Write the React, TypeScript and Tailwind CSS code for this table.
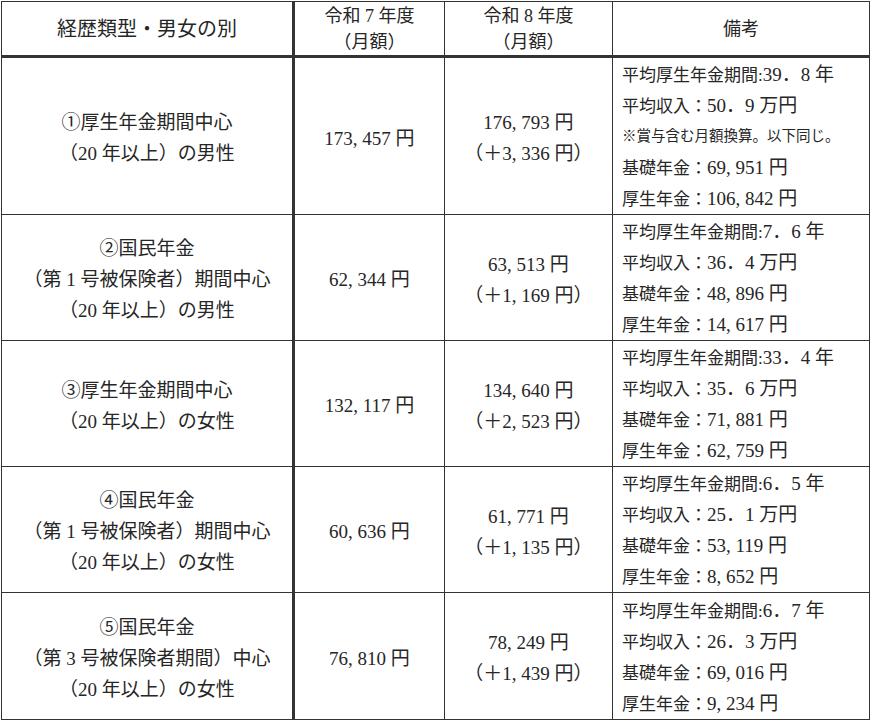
import React from "react";

type Note = { label: string; value?: string; small?: boolean };

type Row = {
  label: string[];
  r7: string;
  r8: string;
  diff: string;
  notes: Note[];
  h: string;
};

const rows: Row[] = [
  {
    label: ["①厚生年金期間中心", "（20 年以上）の男性"],
    r7: "173, 457 円",
    r8: "176, 793 円",
    diff: "（＋3, 336 円）",
    notes: [
      { label: "平均厚生年金期間:", value: "39．8 年" },
      { label: "平均収入：", value: "50．9 万円" },
      { label: "※賞与含む月額換算。以下同じ。", small: true },
      { label: "基礎年金：", value: "69, 951 円" },
      { label: "厚生年金：", value: "106, 842 円" },
    ],
    h: "h-[158px]",
  },
  {
    label: ["②国民年金", "（第 1 号被保険者）期間中心", "（20 年以上）の男性"],
    r7: "62, 344 円",
    r8: "63, 513 円",
    diff: "（＋1, 169 円）",
    notes: [
      { label: "平均厚生年金期間:", value: "7．6 年" },
      { label: "平均収入：", value: "36．4 万円" },
      { label: "基礎年金：", value: "48, 896 円" },
      { label: "厚生年金：", value: "14, 617 円" },
    ],
    h: "h-[126px]",
  },
  {
    label: ["③厚生年金期間中心", "（20 年以上）の女性"],
    r7: "132, 117 円",
    r8: "134, 640 円",
    diff: "（＋2, 523 円）",
    notes: [
      { label: "平均厚生年金期間:", value: "33．4 年" },
      { label: "平均収入：", value: "35．6 万円" },
      { label: "基礎年金：", value: "71, 881 円" },
      { label: "厚生年金：", value: "62, 759 円" },
    ],
    h: "h-[126px]",
  },
  {
    label: ["④国民年金", "（第 1 号被保険者）期間中心", "（20 年以上）の女性"],
    r7: "60, 636 円",
    r8: "61, 771 円",
    diff: "（＋1, 135 円）",
    notes: [
      { label: "平均厚生年金期間:", value: "6．5 年" },
      { label: "平均収入：", value: "25．1 万円" },
      { label: "基礎年金：", value: "53, 119 円" },
      { label: "厚生年金：", value: "8, 652 円" },
    ],
    h: "h-[126px]",
  },
  {
    label: ["⑤国民年金", "（第 3 号被保険者期間）中心", "（20 年以上）の女性"],
    r7: "76, 810 円",
    r8: "78, 249 円",
    diff: "（＋1, 439 円）",
    notes: [
      { label: "平均厚生年金期間:", value: "6．7 年" },
      { label: "平均収入：", value: "26．3 万円" },
      { label: "基礎年金：", value: "69, 016 円" },
      { label: "厚生年金：", value: "9, 234 円" },
    ],
    h: "h-[127px]",
  },
];

export default function App() {
  return (
    <div className="min-h-screen bg-white pt-[1px] pl-[1px] text-[#262626] font-['Liberation_Serif','Noto_Sans_CJK_JP',serif]">
      <table className="table-fixed border-collapse w-[868px] border border-[#333]">
        <colgroup>
          <col className="w-[292px]" />
          <col className="w-[151px]" />
          <col className="w-[168px]" />
          <col className="w-[257px]" />
        </colgroup>
        <thead>
          <tr>
            <th className="h-[55px] pt-[1px] border border-[#333] border-r-[3px] border-r-double border-b-[3px] border-b-double font-normal text-[20px] text-center align-middle">
              経歴類型・男女の別
            </th>
            <th className="h-[55px] border border-[#333] border-b-[3px] border-b-double font-normal text-[18px] leading-[26px] text-center align-middle">
              <div>令和 7 年度</div>
              <div>（月額）</div>
            </th>
            <th className="h-[55px] border border-[#333] border-b-[3px] border-b-double font-normal text-[18px] leading-[26px] text-center align-middle">
              <div>令和 8 年度</div>
              <div>（月額）</div>
            </th>
            <th className="h-[55px] pt-[1px] border border-[#333] border-b-[3px] border-b-double font-normal text-[18px] text-center align-middle">
              備考
            </th>
          </tr>
        </thead>
        <tbody>
          {rows.map((row) => (
            <tr key={row.label[0]}>
              <td className={`${row.h} border border-[#333] border-r-[3px] border-r-double text-center align-middle text-[19px] leading-[31px] pt-[4px]`}>
                {row.label.map((l) => (
                  <div key={l}>{l}</div>
                ))}
              </td>
              <td className={`${row.h} border border-[#333] text-center align-middle text-[19px] leading-[31px] pt-[4px]`}>
                {row.r7}
              </td>
              <td className={`${row.h} border border-[#333] text-center align-middle text-[19px] leading-[31px] pt-[4px]`}>
                <div>{row.r8}</div>
                <div>{row.diff}</div>
              </td>
              <td className={`${row.h} border border-[#333] align-middle pl-[9px] pt-[1px] text-[17px]`}>
                {row.notes.map((n) =>
                  n.small ? (
                    <div key={n.label} className="h-[31px] leading-[31px] text-[14.5px] whitespace-nowrap">
                      {n.label}
                    </div>
                  ) : (
                    <div key={n.label} className="h-[31px] leading-[31px] whitespace-nowrap">
                      {n.label}
                      <span className="text-[19px]">{n.value}</span>
                    </div>
                  )
                )}
              </td>
            </tr>
          ))}
        </tbody>
      </table>
    </div>
  );
}
